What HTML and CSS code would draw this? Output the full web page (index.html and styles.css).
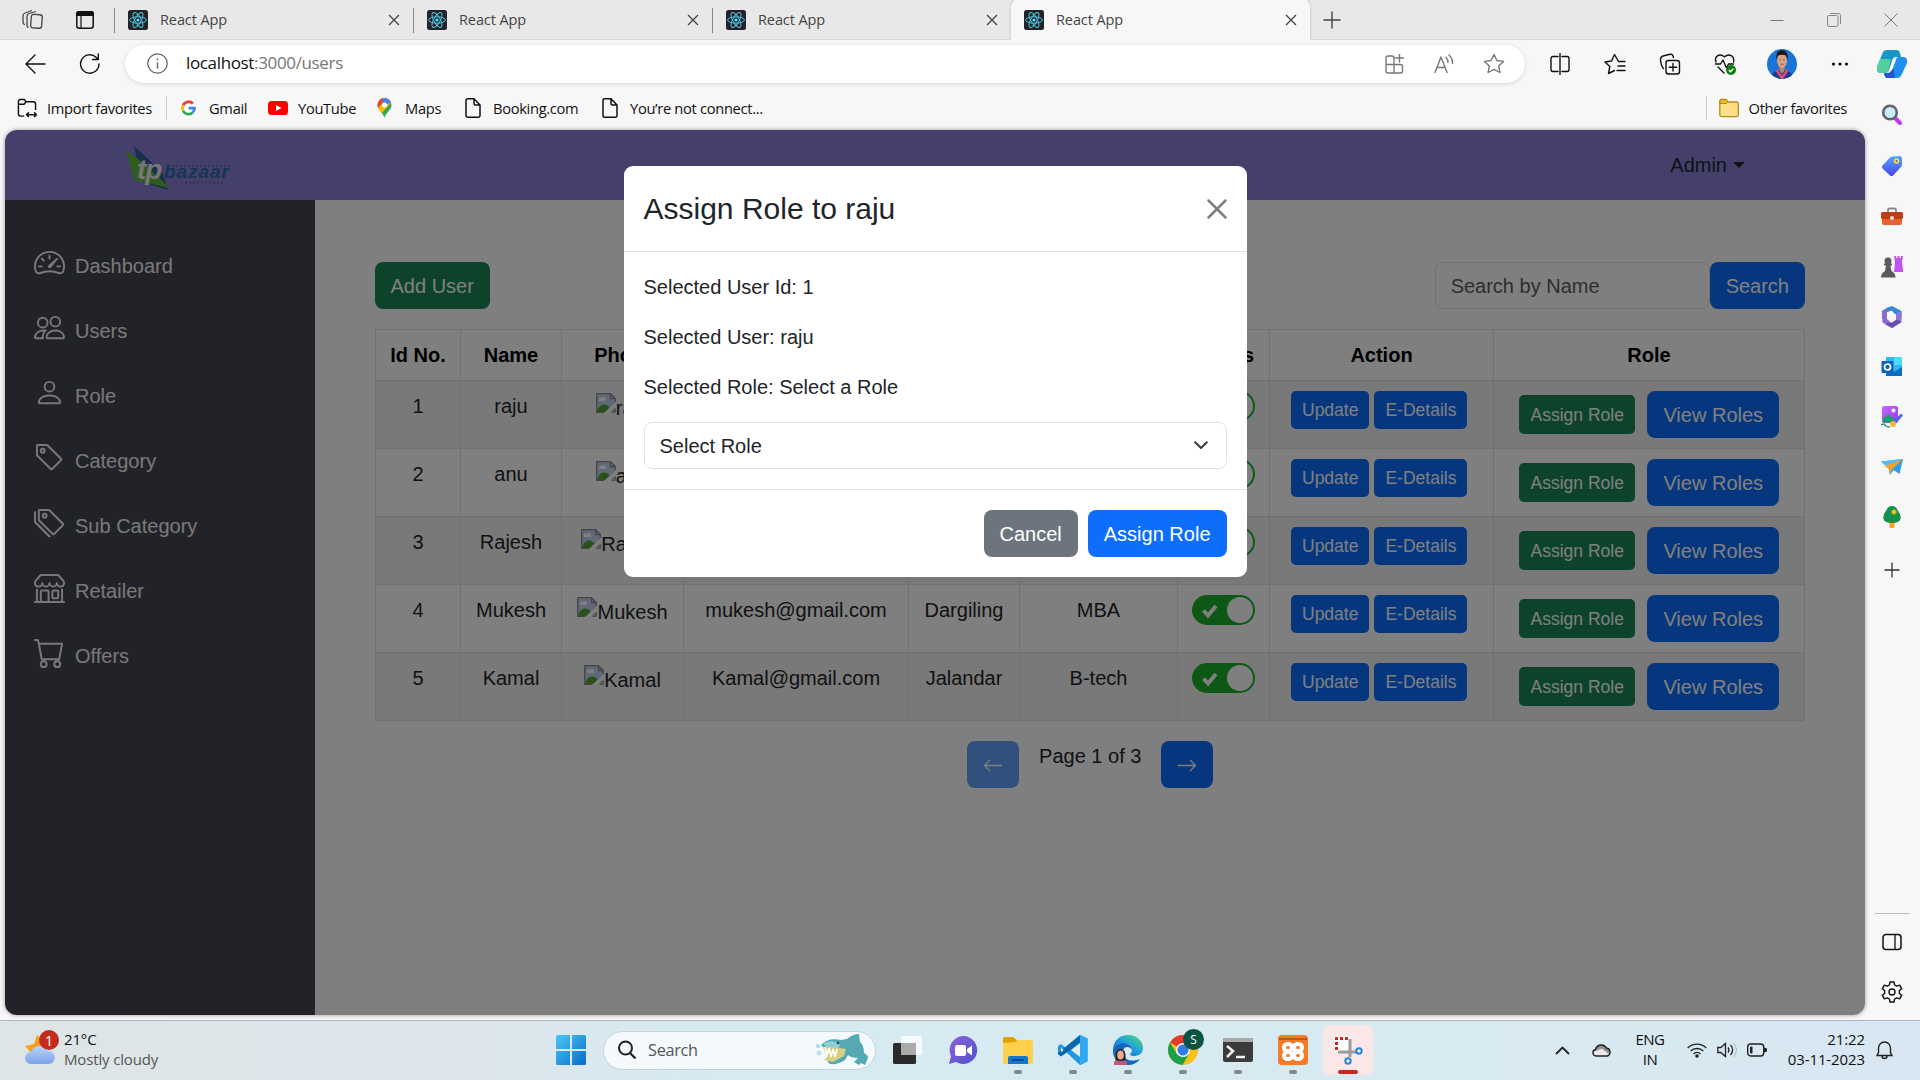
FILE: index.html
```html
<!DOCTYPE html>
<html lang="en">
<head>
<meta charset="utf-8">
<title>React App</title>
<link rel="stylesheet" href="styles.css">
</head>
<body>
<svg class="defs" aria-hidden="true">
  <defs>
    <symbol id="react" viewBox="0 0 20 20"><rect width="20" height="20" rx="2.5" fill="#20232a"/><g fill="none" stroke="#53c1de" stroke-width="1"><ellipse cx="10" cy="10" rx="8.4" ry="3.2"/><ellipse cx="10" cy="10" rx="8.4" ry="3.2" transform="rotate(60 10 10)"/><ellipse cx="10" cy="10" rx="8.4" ry="3.2" transform="rotate(120 10 10)"/></g><circle cx="10" cy="10" r="1.6" fill="#61dafb"/></symbol>
    <symbol id="x" viewBox="0 0 12 12"><path d="M1 1l10 10M11 1L1 11" fill="none" stroke="currentColor" stroke-width="1.3"/></symbol>
    <symbol id="file" viewBox="0 0 20 22"><path d="M3 3.5A1.8 1.8 0 0 1 4.800 1.700H11L17 8v10.500a1.800 1.800 0 0 1-1.800 1.800H4.800A1.800 1.800 0 0 1 3 18.500zM11 1.700V6.500A1.500 1.500 0 0 0 12.500 8H17" fill="none" stroke="#111" stroke-width="1.500"/></symbol>
    <symbol id="broken" viewBox="0 0 20 20"><path d="M.5.500h14l5 5V13l-7 6.500H.500z" fill="#c3d3f0"/><path d="M3 7.500a2 2 0 0 1 3-2.500 2.200 2.200 0 0 1 4 1.500 1.300 1.300 0 0 1 0 1.500H3z" fill="#fff"/><path d="M1 19c1-5 4-7.500 7-7.500 3 0 4.500 1.500 5.500 3L9 19z" fill="#4fa52e"/><path d="M20 9v3.500L12.500 20H8.500z" fill="#fff"/><path d="M8 19.300H.700V.700h13.800l4.800 4.800V9M14.500.700v4.800h4.800" fill="none" stroke="#8a8a8a" stroke-width="1.300"/><path d="M15.500 19.300h3.800V15.500z" fill="#c3d3f0" stroke="#8a8a8a"/></symbol>
    <symbol id="toggle" viewBox="0 0 63 30"><rect width="63" height="30" rx="15" fill="#1cb02a"/><circle cx="48" cy="15" r="13" fill="#fff"/><path d="M11.500 15.500l4.500 5 8-9.500" fill="none" stroke="#fff" stroke-width="4"/></symbol>
    <linearGradient id="blue" x1="0" y1="0" x2="1" y2="1"><stop stop-color="#4cc9f7"/><stop offset="1" stop-color="#0669c7"/></linearGradient>
    <linearGradient id="violet" x1="0" y1="0" x2="1" y2="1"><stop stop-color="#8a63d8"/><stop offset="1" stop-color="#5151cc"/></linearGradient>
    <linearGradient id="edge" x1="0" y1="1" x2="1" y2="0"><stop stop-color="#0c59b8"/><stop offset=".5" stop-color="#1b9de2"/><stop offset="1" stop-color="#59dd6c"/></linearGradient>
    <linearGradient id="pink" x1="0" y1="0" x2="1" y2="1"><stop stop-color="#c26bff"/><stop offset="1" stop-color="#9a35e8"/></linearGradient>
    <linearGradient id="tagblue" x1="0" y1="0" x2="0" y2="1"><stop stop-color="#55a5ff"/><stop offset="1" stop-color="#4544f0"/></linearGradient>
    <linearGradient id="cloud" x1="0" y1="0" x2="0" y2="1"><stop stop-color="#b8d2fb"/><stop offset="1" stop-color="#7ba4ea"/></linearGradient>
  </defs>
</svg>

<header class="tabstrip">
  <div class="strip-actions">
    <svg class="workspaces" width="21" height="22" viewBox="0 0 21 22"><g fill="none" stroke="#444" stroke-width="1.300"><rect x="9" y="5.500" width="11" height="13.500" rx="2.500" transform="rotate(4 14 12)"/><path d="M6.500 18.500a2 2 0 0 1-1.500-2V7.500a3 3 0 0 1 2-3l7-2M3 15.500A2 2 0 0 1 1 13.500V6.500A3 3 0 0 1 3 4l7-2.500"/></g></svg>
    <svg width="18" height="20" viewBox="0 0 18 20"><rect x=".8" y="1.800" width="16.400" height="16.400" rx="2.500" fill="none" stroke="#111" stroke-width="1.500"/><path d="M0 6V3.500A2.500 2.500 0 0 1 2.500 1h13A2.500 2.500 0 0 1 18 3.500V6z" fill="#111"/><path d="M5 6v12" stroke="#111" stroke-width="1.200"/></svg>
  </div>
  <div class="tab"><svg class="fav"><use href="#react"/></svg><span>React App</span><svg class="tab-x"><use href="#x"/></svg></div>
  <div class="tab"><svg class="fav"><use href="#react"/></svg><span>React App</span><svg class="tab-x"><use href="#x"/></svg></div>
  <div class="tab"><svg class="fav"><use href="#react"/></svg><span>React App</span><svg class="tab-x"><use href="#x"/></svg></div>
  <div class="tab active"><svg class="fav"><use href="#react"/></svg><span>React App</span><svg class="tab-x"><use href="#x"/></svg></div>
  <svg class="newtab" width="18" height="18" viewBox="0 0 18 18"><path d="M9 .5v17M.500 9h17" stroke="#444" stroke-width="1.400"/></svg>
  <div class="winctl">
    <svg viewBox="0 0 14 14"><path d="M.500 7.500h13" stroke="#777"/></svg>
    <svg viewBox="0 0 14 14"><g fill="none" stroke="#888"><rect x=".5" y="2.500" width="10.500" height="11" rx="1.500"/><path d="M3 .500h8.500a2 2 0 0 1 2 2V11"/></g></svg>
    <svg viewBox="0 0 14 14"><path d="M.500.500l13 13M13.500.500l-13 13" stroke="#777"/></svg>
  </div>
</header>

<div class="window">
  <div class="browser">
    <nav class="toolbar">
      <span class="slot"><svg width="22" height="22" viewBox="0 0 22 22"><path d="M21 11H2M11 2L2 11l9 9" class="ln"/></svg></span>
      <span class="slot"><svg width="22" height="22" viewBox="0 0 22 22"><path d="M20 11a9.200 9.200 0 1 1-3-6.800l2 2M19.300 1v5.500H13.500" class="ln"/></svg></span>
      <div class="address">
        <svg width="21" height="21" viewBox="0 0 21 21"><circle cx="10.500" cy="10.500" r="9.700" fill="none" stroke="#666" stroke-width="1.300"/><path d="M10.500 9.500v6M10.500 5.500v1.800" stroke="#666" stroke-width="1.500"/></svg>
        <span class="url">localhost<i>:3000/users</i></span>
        <span class="slot g"><svg width="19" height="20" viewBox="0 0 19 20"><path d="M9 10.500V4a2 2 0 0 0-2-2H3a2 2 0 0 0-2 2v13a2 2 0 0 0 2 2h12.500a2 2 0 0 0 2-2v-4.500a2 2 0 0 0-2-2H1M9 10.500V19M14.500 0v8M10.500 4h8" class="ln"/></svg></span>
        <span class="slot g"><svg width="20" height="20" viewBox="0 0 20 20"><path d="M1 18.500L7 3l6 15.500M3 13.500h8M12 3.500a7 7 0 0 1 2 5M15 1a11 11 0 0 1 3.500 8.500" class="ln"/></svg></span>
        <span class="slot g"><svg width="22" height="22" viewBox="0 0 22 22"><path d="M11 1.500l2.900 6 6.600.9-4.800 4.600 1.200 6.500L11 16.400l-5.900 3.100 1.200-6.500L1.500 8.400l6.600-.9z" class="ln"/></svg></span>
      </div>
      <span class="slot first"><svg width="20" height="22" viewBox="0 0 20 22"><path d="M8 3.500H3A2 2 0 0 0 1 5.500v11a2 2 0 0 0 2 2h5M12 3.500h5a2 2 0 0 1 2 2v11a2 2 0 0 1-2 2h-5M10 .500v21" class="ln"/></svg></span>
      <span class="slot"><svg width="22" height="22" viewBox="0 0 22 22"><path d="M21 8.500h-6.500L10.500 1.500 7.500 8 1 9l4.800 4.600L4.500 20.500l6-3M14 13h7M13 17.500h8" class="ln"/></svg></span>
      <span class="slot"><svg width="22" height="22" viewBox="0 0 22 22"><rect x="7" y="7.500" width="13.500" height="13.500" rx="2.500" class="ln"/><path d="M14 10.500v7.500M10.200 14.200h7.500M4.500 15.500C3 15 1.500 9 1.500 6.500s1-3 2.500-3.500l7-1.700c2-.5 3 .7 3.500 3.200" class="ln"/></svg></span>
      <span class="slot"><svg width="22" height="22" viewBox="0 0 22 22"><path d="M2 9C0 4 5-.500 10.500 3.800 16-.500 21 4 19.500 9M1.500 11h5l2.500-4 3.500 8 2-4h5M4 14l6 6" class="ln"/><circle cx="17" cy="17" r="5" fill="#107c10"/><path d="M14.800 17l1.700 1.700 2.800-3" fill="none" stroke="#fff" stroke-width="1.300"/></svg></span>
      <span class="slot av"><svg width="30" height="30" viewBox="0 0 30 30"><clipPath id="ac"><circle cx="15" cy="15" r="15"/></clipPath><g clip-path="url(#ac)"><rect width="30" height="30" fill="#1976d8"/><path d="M4 30c0-6 5-9 11-9s11 3 11 9z" fill="#1c3d8c"/><path d="M9.500 21l5.500 8 5.500-8" fill="none" stroke="#e0506e" stroke-width="2.500"/><path d="M12.500 16h5v5.500L15 25l-2.500-3.500z" fill="#c08466"/><ellipse cx="15" cy="11.500" rx="5" ry="7.500" fill="#d9a184"/><path d="M9.700 11C8.500 4 11 1.200 15 1.200S21.500 4 20.300 11L19 6.500c-2.500-1-5.500-1-8 0z" fill="#1c1618"/><path d="M12 10.800h2M16 10.800h2M13.500 15.300h3" stroke="#7d4b3c" stroke-width=".8"/></g></svg></span>
      <span class="slot"><svg width="18" height="6" viewBox="0 0 18 6"><circle cx="2.500" cy="3" r="1.600"/><circle cx="9" cy="3" r="1.600"/><circle cx="15.500" cy="3" r="1.600"/></svg></span>
    </nav>
    <nav class="bookmarks">
      <a class="import"><svg viewBox="0 0 21 22"><path d="M7.500 19.500H4A2.500 2.500 0 0 1 1.500 17V4A2 2 0 0 1 3.500 2h4l2 2.500H17A2.500 2.500 0 0 1 19.500 7v6M1.500 7h6l2-2.500M10 18h11M12.500 15.500L10 18l2.500 2.500M18 15.500l2.500 2.500-2.500 2.500" fill="none" stroke="#111" stroke-width="1.500"/></svg>Import favorites</a>
      <a><svg viewBox="0 0 20 20"><circle cx="9.500" cy="10" r="10" fill="#fff"/><g fill="none" stroke-width="2.800"><path d="M14 5.600A6.200 6.200 0 0 0 4 7.300" stroke="#ea4335"/><path d="M4 7.300a6.200 6.200 0 0 0 0 5.600" stroke="#fbbc05"/><path d="M4 12.900a6.200 6.200 0 0 0 9.500 1.800" stroke="#34a853"/><path d="M13.500 14.700a6 6 0 0 0 2-4.500H9.500" stroke="#4285f4"/></g></svg>Gmail</a>
      <a><svg viewBox="0 0 20 20"><rect y="3" width="20" height="14" rx="3.500" fill="#f00"/><path d="M8 7l5.500 3L8 13z" fill="#fff"/></svg>YouTube</a>
      <a><svg viewBox="0 0 20 20"><clipPath id="pin"><path d="M9.500 20C8.500 15 2.500 12 2.500 7a7 7 0 0 1 14 0c0 5-6 8-7 13z"/></clipPath><g clip-path="url(#pin)"><rect width="20" height="20" fill="#34a853"/><path d="M0 0h20L5 17H0z" fill="#fbbc04"/><path d="M0 0h12L3 10H0z" fill="#ea4335"/><path d="M7 0h13v4L9 7z" fill="#4285f4"/></g><circle cx="9.500" cy="7" r="2.500" fill="#fff"/></svg>Maps</a>
      <a><svg><use href="#file"/></svg>Booking.com</a>
      <a><svg><use href="#file"/></svg>You’re not connect...</a>
      <a class="other"><svg viewBox="0 0 20 20"><path d="M.8 4V3A1.500 1.500 0 0 1 2.300 1.500H7L9 4h8.500A1.800 1.800 0 0 1 19.300 5.800v11a1.800 1.800 0 0 1-1.800 1.800h-15A1.800 1.800 0 0 1 .8 16.800z" fill="#ffdf85" stroke="#b58a14" stroke-width="1.300"/><path d="M1 5.500V3A1.500 1.500 0 0 1 2.500 1.700H7l1.700 2L7.500 5.500z" fill="#eac12c" stroke="#b58a14"/></svg>Other favorites</a>
    </nav>

    <div class="viewport">
      <div class="app-header">
        <svg class="logo" width="106" height="44" viewBox="0 0 106 44"><path d="M8 0l28 26 6 18-26-8z" fill="#2a5f9a"/><path d="M0 4l16 12 28 26-36-8z" fill="#62b83c"/><text x="11" y="33" class="tp">tp</text><text x="38" y="32" class="bz" textLength="65">bazaar</text><path d="M46 20h58M59 36.500h40" stroke="#6468a4" stroke-width="2" stroke-dasharray="2 2"/></svg>
        <span class="admin">Admin</span>
      </div>
      <div class="app-body">
        <aside class="side">
          <a><svg viewBox="0 0 16 16"><path d="M8 4a.5.5 0 0 1 .5.5V6a.5.5 0 0 1-1 0V4.500A.5.5 0 0 1 8 4M3.732 5.732a.5.5 0 0 1 .707 0l.915.914a.5.5 0 1 1-.708.708l-.914-.915a.5.5 0 0 1 0-.707M2 10a.5.5 0 0 1 .5-.5h1.586a.5.5 0 0 1 0 1H2.500A.5.5 0 0 1 2 10m9.500 0a.5.5 0 0 1 .5-.5h1.500a.5.5 0 0 1 0 1H12a.5.5 0 0 1-.5-.5m.754-4.246a.39.39 0 0 0-.527-.02L7.547 9.310a.91.91 0 1 0 1.302 1.258l3.434-4.297a.39.39 0 0 0-.029-.518z"/><path fill-rule="evenodd" d="M0 10a8 8 0 1 1 15.547 2.661c-.442 1.253-1.845 1.602-2.932 1.250C11.309 13.488 9.475 13 8 13c-1.474 0-3.310.488-4.615.911-1.087.352-2.490.003-2.932-1.250A8 8 0 0 1 0 10m8-7a7 7 0 0 0-6.603 9.329c.203.575.923.876 1.680.63C4.397 12.533 6.358 12 8 12s3.604.532 4.923.96c.757.245 1.477-.056 1.680-.631A7 7 0 0 0 8 3"/></svg>Dashboard</a>
          <a><svg viewBox="0 0 16 16"><path d="M15 14s1 0 1-1-1-4-5-4-5 3-5 4 1 1 1 1zm-7.978-1L7 12.996c.001-.264.167-1.030.76-1.720C8.312 10.629 9.282 10 11 10c1.717 0 2.687.63 3.240 1.276.593.69.758 1.457.76 1.720l-.008.002-.014.002zM11 7a2 2 0 1 0 0-4 2 2 0 0 0 0 4m3-2a3 3 0 1 1-6 0 3 3 0 0 1 6 0M6.936 9.280a6 6 0 0 0-1.230-.247A7 7 0 0 0 5 9c-4 0-5 3-5 4q0 1 1 1h4.216A2.240 2.240 0 0 1 5 13c0-1.010.377-2.042 1.090-2.904.243-.294.526-.569.846-.816M4.920 10A5.500 5.500 0 0 0 4 13H1c0-.26.164-1.030.76-1.724.545-.636 1.492-1.256 3.160-1.275ZM1.500 5.500a3 3 0 1 1 6 0 3 3 0 0 1-6 0m3-2a2 2 0 1 0 0 4 2 2 0 0 0 0-4"/></svg>Users</a>
          <a><svg viewBox="0 0 16 16"><path d="M8 8a3 3 0 1 0 0-6 3 3 0 0 0 0 6m2-3a2 2 0 1 1-4 0 2 2 0 0 1 4 0m4 8c0 1-1 1-1 1H3s-1 0-1-1 1-4 6-4 6 3 6 4m-1-.004c-.001-.246-.154-.986-.832-1.664C11.516 10.680 10.289 10 8 10s-3.516.68-4.168 1.332c-.678.678-.83 1.418-.832 1.664z"/></svg>Role</a>
          <a><svg viewBox="0 0 16 16"><path d="M6 4.500a1.500 1.500 0 1 1-3 0 1.500 1.500 0 0 1 3 0m-1 0a.5.5 0 1 0-1 0 .5.5 0 0 0 1 0"/><path d="M2 1h4.586a1 1 0 0 1 .707.293l7 7a1 1 0 0 1 0 1.414l-4.586 4.586a1 1 0 0 1-1.414 0l-7-7A1 1 0 0 1 1 6.586V2a1 1 0 0 1 1-1m0 5.586 7 7L13.586 9l-7-7H2z"/></svg>Category</a>
          <a><svg viewBox="0 0 16 16"><path d="M3 2v4.586l7 7L14.586 9l-7-7zM2 2a1 1 0 0 1 1-1h4.586a1 1 0 0 1 .707.293l7 7a1 1 0 0 1 0 1.414l-4.586 4.586a1 1 0 0 1-1.414 0l-7-7A1 1 0 0 1 2 6.586z"/><path d="M5.500 5a.5.5 0 1 1 0-1 .5.5 0 0 1 0 1m0 1a1.500 1.500 0 1 0 0-3 1.500 1.500 0 0 0 0 3M1 7.086a1 1 0 0 0 .293.707L8.750 15.250l-.043.043a1 1 0 0 1-1.414 0l-7-7A1 1 0 0 1 0 7.586V3a1 1 0 0 1 1-1z"/></svg>Sub Category</a>
          <a><svg viewBox="0 0 16 16"><path d="M2.970 1.350A1 1 0 0 1 3.730 1h8.540a1 1 0 0 1 .76.35l2.609 3.044A1.500 1.500 0 0 1 16 5.370v.255a2.375 2.375 0 0 1-4.250 1.458A2.370 2.370 0 0 1 9.875 8 2.370 2.370 0 0 1 8 7.083 2.370 2.370 0 0 1 6.125 8a2.370 2.370 0 0 1-1.875-.917A2.375 2.375 0 0 1 0 5.625V5.370a1.500 1.500 0 0 1 .361-.976zm1.780 4.275a1.375 1.375 0 0 0 2.750 0 .5.5 0 0 1 1 0 1.375 1.375 0 0 0 2.750 0 .5.5 0 0 1 1 0 1.375 1.375 0 1 0 2.750 0V5.370a.5.5 0 0 0-.12-.325L12.270 2H3.730L1.120 5.045A.5.5 0 0 0 1 5.370v.255a1.375 1.375 0 0 0 2.750 0 .5.5 0 0 1 1 0M1.500 8.500A.5.5 0 0 1 2 9v6h1v-5a1 1 0 0 1 1-1h3a1 1 0 0 1 1 1v5h6V9a.5.5 0 0 1 1 0v6h.5a.5.5 0 0 1 0 1H.5a.5.5 0 0 1 0-1H1V9a.5.5 0 0 1 .5-.5M4 15h3v-5H4zm5-5a1 1 0 0 1 1-1h2a1 1 0 0 1 1 1v3a1 1 0 0 1-1 1h-2a1 1 0 0 1-1-1zm3 0h-2v3h2z"/></svg>Retailer</a>
          <a><svg viewBox="0 0 16 16"><path d="M0 1.500A.5.5 0 0 1 .5 1H2a.5.5 0 0 1 .485.379L2.890 3H14.500a.5.5 0 0 1 .491.592l-1.500 8A.5.5 0 0 1 13 12H4a.5.5 0 0 1-.491-.408L2.010 3.607 1.610 2H.5a.5.5 0 0 1-.5-.5M3.102 4l1.313 7h8.170l1.313-7zM5 12a2 2 0 1 0 0 4 2 2 0 0 0 0-4m7 0a2 2 0 1 0 0 4 2 2 0 0 0 0-4m-7 1a1 1 0 1 1 0 2 1 1 0 0 1 0-2m7 0a1 1 0 1 1 0 2 1 1 0 0 1 0-2"/></svg>Offers</a>
        </aside>
        <main class="main">
          <div class="actions"><button class="btn green">Add User</button><div class="search"><span class="field">Search by Name</span><button class="btn">Search</button></div></div>
          <table>
            <colgroup><col class="c1"><col class="c2"><col class="c3"><col class="c4"><col class="c5"><col class="c6"><col class="c7"><col class="c8"><col class="c9"></colgroup>
            <thead><tr><th>Id No.</th><th>Name</th><th>Photo</th><th></th><th></th><th></th><th>Status</th><th>Action</th><th>Role</th></tr></thead>
            <tbody>
              <tr><td>1</td><td>raju</td><td><span class="photo"><svg><use href="#broken"/></svg>raju</span></td><td></td><td></td><td></td><td><svg class="tg"><use href="#toggle"/></svg></td><td><div class="acts"><button class="btn sm">Update</button><button class="btn sm">E-Details</button></div></td><td><div class="roles"><button class="btn sm green">Assign Role</button><button class="btn">View Roles</button></div></td></tr>
              <tr><td>2</td><td>anu</td><td><span class="photo"><svg><use href="#broken"/></svg>anu</span></td><td></td><td></td><td></td><td><svg class="tg"><use href="#toggle"/></svg></td><td><div class="acts"><button class="btn sm">Update</button><button class="btn sm">E-Details</button></div></td><td><div class="roles"><button class="btn sm green">Assign Role</button><button class="btn">View Roles</button></div></td></tr>
              <tr><td>3</td><td>Rajesh</td><td><span class="photo"><svg><use href="#broken"/></svg>Rajesh</span></td><td></td><td></td><td></td><td><svg class="tg"><use href="#toggle"/></svg></td><td><div class="acts"><button class="btn sm">Update</button><button class="btn sm">E-Details</button></div></td><td><div class="roles"><button class="btn sm green">Assign Role</button><button class="btn">View Roles</button></div></td></tr>
              <tr><td>4</td><td>Mukesh</td><td><span class="photo"><svg><use href="#broken"/></svg>Mukesh</span></td><td>mukesh@gmail.com</td><td>Dargiling</td><td>MBA</td><td><svg class="tg"><use href="#toggle"/></svg></td><td><div class="acts"><button class="btn sm">Update</button><button class="btn sm">E-Details</button></div></td><td><div class="roles"><button class="btn sm green">Assign Role</button><button class="btn">View Roles</button></div></td></tr>
              <tr><td>5</td><td>Kamal</td><td><span class="photo"><svg><use href="#broken"/></svg>Kamal</span></td><td>Kamal@gmail.com</td><td>Jalandar</td><td>B-tech</td><td><svg class="tg"><use href="#toggle"/></svg></td><td><div class="acts"><button class="btn sm">Update</button><button class="btn sm">E-Details</button></div></td><td><div class="roles"><button class="btn sm green">Assign Role</button><button class="btn">View Roles</button></div></td></tr>
            </tbody>
          </table>
          <div class="pager">
            <button class="btn page off"><svg width="20" height="20" viewBox="0 0 20 20"><path d="M19 10.500H2M7 5l-5.500 5.500L7 16" fill="none" stroke="#fff" stroke-width="1.300"/></svg></button>
            <span>Page 1 of 3</span>
            <button class="btn page"><svg width="20" height="20" viewBox="0 0 20 20"><path d="M1 10.500h17M13 5l5.500 5.500L13 16" fill="none" stroke="#fff" stroke-width="1.300"/></svg></button>
          </div>
        </main>
      </div>
      <div class="backdrop">
        <div class="modal">
          <div class="m-head"><h4>Assign Role to raju</h4><svg width="20" height="20" viewBox="0 0 20 20"><path d="M1.500 1.500l17 17M18.500 1.500l-17 17" stroke="#7f7f7f" stroke-width="2.500" stroke-linecap="round"/></svg></div>
          <div class="m-body">
            <p>Selected User Id: 1</p><p>Selected User: raju</p><p>Selected Role: Select a Role</p>
            <div class="select">Select Role<svg width="14" height="9" viewBox="0 0 14 9"><path d="M1.200 1.200L7 7l5.800-5.800" fill="none" stroke="#343a40" stroke-width="2" stroke-linecap="round" stroke-linejoin="round"/></svg></div>
          </div>
          <div class="m-foot"><button class="btn gray">Cancel</button><button class="btn">Assign Role</button></div>
        </div>
      </div>
    </div>
  </div>

  <aside class="edgebar">
    <svg class="copilot" width="30" height="28" viewBox="0 0 30 28"><path d="M6 2q1-2 4-2h10q2 0 3 3l1 4h-5q-3 0-4 4l-3 9q-1 3-4 3H4q-5 0-4-6z" fill="#1696c9"/><path d="M0 17L3 9h11l-2 9q-1 5-4 5H4q-5 0-4-6z" fill="#53cf9c"/><path d="M24 26q-1 2-4 2H10q-2 0-3-5h4q3 0 4-4l3-9q1-3 4-3h4q5 0 4 6z" fill="#1d8ef2"/><path d="M7 23h4q3 0 4-4l1-3 2 12h-8q-2 0-3-5z" fill="#2456d3"/><path d="M14 17l3-8q1-2 3-2l-4 11q-1 3-3 3z" fill="#fff"/></svg>
    <svg viewBox="0 0 22 22"><path d="M14 14l5 5" stroke="#bd36f5" stroke-width="4" stroke-linecap="round"/><circle cx="9" cy="8.500" r="6.800" fill="#c9ebfc" stroke="#646464" stroke-width="2.600"/></svg>
    <svg viewBox="0 0 22 22"><path d="M11 1.500l7.500-.5q2.500 0 2.500 2.500V10q0 1-1 2l-8 8.500q-1.500 1.500-3 0L1.500 13.500q-1.500-1.500 0-3L9 2.500z" fill="url(#tagblue)"/><circle cx="15.500" cy="6" r="1.900" fill="#2f65d8" stroke="#ffdc32" stroke-width="1.800"/></svg>
    <svg viewBox="0 0 22 22"><path d="M7 6V4q0-1.500 1.500-1.500h5Q15 2.500 15 4v2" fill="none" stroke="#8a8a8a" stroke-width="1.800"/><rect x="1" y="10" width="20" height="9" rx="2" fill="#e5622e"/><rect y="6" width="22" height="7" rx="1.500" fill="#bb3f12"/><circle cx="11" cy="12" r="2" fill="#ddd"/></svg>
    <svg viewBox="0 0 22 22"><path d="M13 0h2v2h1.500V0h2v2H20V0h2l-1 6 1 8q1 1 0 2h-9l1-10z" fill="#c453f2"/><path d="M3.500 5a3.500 3.500 0 1 1 7 0q0 1.500-1 2.500h1.500v2H9.500l1 5.500q4 2 4 6.500H0q0-4.500 4-6.500l1-5.500H3v-2h1.500q-1-1-1-2.500z" fill="#5a5a5a"/></svg>
    <svg viewBox="0 0 22 22"><path d="M6 1.800L11 0l9.500 5v7l-6.500-3-3-4.500-6 2V11L1 13V5z" fill="#3686d6"/><path d="M20.500 5v11L15 19.500V8z" fill="#8f72da"/><path d="M15 19.500L11 22l-9.500-5.500L1 7l5-5v11l5 4.500z" fill="#8a6cc8"/><path d="M20.500 16L11 22l-7-4 7-1.500 4.500-3z" fill="#6a4bb0"/><path d="M11 6l4 2.500v5L11 16l-4-2.500v-5z" fill="#f7f7f7"/></svg>
    <svg viewBox="0 0 22 22"><path d="M5 1h16v19H5z" fill="#35b8f1"/><path d="M13 1h8v8h-8z" fill="#50d9ff"/><path d="M5 11l8 5 8-5v9H5z" fill="#0a6ebd"/><rect x=".5" y="5" width="12" height="12" rx="1" fill="#0f63b8"/><circle cx="6.500" cy="11" r="3" fill="none" stroke="#fff" stroke-width="1.700"/></svg>
    <svg viewBox="0 0 22 22"><rect x="1" y="0" width="16" height="17" rx="2" fill="url(#pink)"/><path d="M1 14l6-6 9 8H2z" fill="#15a06a"/><circle cx="12.500" cy="4.500" r="2" fill="#fff"/><path d="M12 15.500L20 7.500l2 2-7.500 8.500z" fill="#5265ed"/><circle cx="12" cy="18" r="3" fill="#f5b83d"/><path d="M0 19q3-2 4 0t5 2" fill="none" stroke="#15a06a" stroke-width="1.500"/></svg>
    <svg viewBox="0 0 22 22"><path d="M0 5.500L22 3l-3.500 15-6-4-3.500 5-1.500-7z" fill="#2c9cf0"/><path d="M0 5.500L22 3 8 12z" fill="#55bdf8"/><path d="M22 3L4 10l4 3 1 6 1.500-5z" fill="#f5a11d"/></svg>
    <svg viewBox="0 0 22 22"><rect x="8.500" y="15" width="5" height="7" rx="1" fill="#f3a429"/><path d="M11 0q4 0 5.500 4 4 5 3 9-1 4-8.500 4T2.500 13q-1-4 3-9Q7 0 11 0z" fill="#16914a"/><path d="M13 3.500v5M10.500 6h5" stroke="#f7bd25" stroke-width="2.500"/></svg>
    <svg class="plus" viewBox="0 0 22 22"><path d="M11 3.500v15M3.500 11h15" stroke="#333" stroke-width="1.300"/></svg>
    <hr>
    <svg class="panel" viewBox="0 0 22 22"><rect x="2" y="3.500" width="18" height="15" rx="3" fill="none" stroke="#111" stroke-width="1.500"/><path d="M14 3.500v15" stroke="#111" stroke-width="1.300"/></svg>
    <svg class="gear" viewBox="0 0 22 22"><path d="M9 1h4l.6 3 2.100 1.200 2.900-1 2 3.500-2.300 2v2.600l2.300 2-2 3.500-2.900-1-2.100 1.200L13 21H9l-.6-3-2.100-1.200-2.900 1-2-3.500 2.300-2V9.700l-2.300-2 2-3.500 2.900 1L8.400 4z" fill="none" stroke="#111" stroke-width="1.400" stroke-linejoin="round"/><circle cx="11" cy="11" r="3" fill="none" stroke="#111" stroke-width="1.400"/></svg>
  </aside>
</div>

<footer class="taskbar">
  <div class="weather">
    <svg width="35" height="40" viewBox="0 0 35 40"><path d="M12 5l-3 9-9 2 7 8 8-1 8-9z" fill="#f4a21c"/><path d="M6 34a6 6 0 0 1 0-12 9 9 0 0 1 16.500-1A6.500 6.500 0 0 1 24 34z" fill="url(#cloud)"/><circle cx="24" cy="10" r="10" fill="#c42b1c"/><text x="24" y="15.500" class="badge">1</text></svg>
    <div>21°C<br><span>Mostly cloudy</span></div>
  </div>
  <svg class="win" width="30" height="30" viewBox="0 0 30 30"><path d="M0 1.500Q0 0 1.500 0H14v14H0zM16 0h12.500Q30 0 30 1.500V14H16zM0 16h14v14H1.500Q0 30 0 28.500zM16 16h14v12.500q0 1.500-1.500 1.500H16z" fill="url(#blue)"/></svg>
  <div class="pill"><svg width="20" height="20" viewBox="0 0 20 20"><circle cx="8.500" cy="8" r="6.500" fill="none" stroke="#222" stroke-width="2"/><path d="M13 13l5.500 5.500" stroke="#222" stroke-width="2.300"/></svg><span>Search</span><svg class="shark" width="54" height="32" viewBox="0 0 54 32"><path d="M6 11Q13 3 26 6l6-1q6-5 12-5l1 8q4 3 4 11 4 2 4 5l-3 7-4-2-2 2-5-3 4-4q-7 0-10-3l-3 5q-7 5-15 4l-3-3q10-2 10-7Q8 14 6 11z" fill="#55a8b4"/><path d="M8 9q10-4 17 1l-2 6q-7 0-12-3z" fill="#8ed2d6"/><path d="M8 13l4 10-3 3 9 2 11-6 2-7-6-1z" fill="#d9cf83"/><path d="M10 13l2 8 2-7 2 9 2-8 2 8 2-8" fill="none" stroke="#fff" stroke-width="1.500"/><circle cx="23" cy="9" r="1.300" fill="#174b60"/><circle cx="3" cy="12" r="2" fill="#9fd9e8"/><circle cx="4" cy="19" r="2.500" fill="#b9e3ee"/></svg></div>
  <div class="apps">
    <span><svg viewBox="0 0 30 30"><rect x="0" y="8" width="23" height="21" rx="1.500" fill="#2b2b2b"/><rect x="8" y="1" width="21" height="19" rx="1.500" fill="#fff" fill-opacity=".75"/><rect x="8" y="8" width="15" height="12" fill="#aaa"/></svg></span>
    <span><svg viewBox="0 0 30 30"><path d="M15 1a14 14 0 1 1-7 26l-7 2 2-8A14 14 0 0 1 15 1z" fill="url(#violet)"/><rect x="7" y="10" width="11" height="11" rx="2" fill="#fff"/><path d="M19 14l5-3.500v10L19 17z" fill="#fff"/></svg></span>
    <span class="run"><svg viewBox="0 0 30 30"><path d="M0 4q0-2 2-2h8l4 3v6H0z" fill="#dfa100"/><path d="M0 8l12-1 3-2h13q2 0 2 2v20q0 2-2 2H2q-2 0-2-2z" fill="#ffd04a"/><path d="M5 29v-6q0-2 2-2h16q2 0 2 2v6z" fill="#1278cf"/><path d="M9 25h12" stroke="#084b88" stroke-width="2"/></svg></span>
    <span class="run"><svg viewBox="0 0 30 30"><path d="M22 0l7.500 3.500v23L22 30 8 17 3 21l-3-2V11l3-2 5 4z" fill="#2196e3"/><path d="M22 0v8l-9.500 7L3 21.500 0 19v-1z" fill="#0868aa"/><path d="M22 8v14l-9-7z" fill="#dceff5"/><path d="M3 12.500v5L5.500 15z" fill="#dceff5"/><path d="M22 0l7.500 3.500v23L22 30z" fill="#2fa8f3"/></svg></span>
    <span class="run"><svg viewBox="0 0 30 30"><path d="M15 0c9 0 15 6 15 13 0 6-5 8-9 8-3 0-4-1-4-2 1-1 2-2 2-4 0-4-4-7-9-7-4 0-8 2-10 6C1 5 7 0 15 0z" fill="url(#edge)"/><path d="M0 14c2-4 6-6 10-6 5 0 9 3 9 7-1-2-3-3-5-3-3 0-4 3-4 5 0 7 7 11 17 7-3 4-7 6-12 6C6 30-1 23 0 14z" fill="#1268c0"/><path d="M1 30v-3q2-3 6-3t7 3v3z" fill="#c05a78"/><path d="M2.500 25q-1-11 5-11t5 11q-5 2-10 0z" fill="#2a1f22"/><ellipse cx="7.500" cy="20" rx="3.300" ry="4.500" fill="#e2ad92"/></svg></span>
    <span class="run"><svg class="wide" viewBox="0 0 36 36"><circle cx="15" cy="21" r="15" fill="#fbc116"/><path d="M15 21L2 13.500a15 15 0 0 1 26 0z" fill="#e33b2e"/><path d="M2 13.500A15 15 0 0 0 14.500 36L21 25l-12 0z" fill="#1da04b"/><circle cx="15" cy="21" r="7" fill="#fff"/><circle cx="15" cy="21" r="5.600" fill="#3579e6"/><circle cx="25.500" cy="10.500" r="10.500" fill="#0b5345"/><text x="25.500" y="15" class="sbadge">S</text></svg></span>
    <span class="run"><svg viewBox="0 0 30 30"><rect y="3" width="30" height="24" rx="2" fill="#3b3b3b"/><path d="M0 7V5q0-2 2-2h26q2 0 2 2v2z" fill="#aaa"/><path d="M4 11l6 5-6 6M13 22h9" fill="none" stroke="#f2f2f2" stroke-width="2.500"/></svg></span>
    <span class="run"><svg viewBox="0 0 30 30"><rect width="30" height="30" rx="4" fill="#f47b29"/><path d="M1 4h28" stroke="#c85610" stroke-width="2"/><g fill="none" stroke="#fff" stroke-width="4"><rect x="6" y="9" width="8" height="7" rx="3.500"/><rect x="16" y="9" width="8" height="7" rx="3.500"/><rect x="6" y="17" width="8" height="7" rx="3.500"/><rect x="16" y="17" width="8" height="7" rx="3.500"/></g></svg></span>
    <span class="snip"><svg viewBox="0 0 30 30"><rect x="1" y="1" width="16" height="15" fill="#fff"/><path d="M3.500 15V3.500H15" fill="none" stroke="#d9230f" stroke-width="3" stroke-dasharray="3 2"/><path d="M17 4v18M5 17h18" stroke="#989da0" stroke-width="3"/><g fill="none" stroke="#2188d9" stroke-width="2"><circle cx="26" cy="16" r="2.700"/><circle cx="15" cy="26" r="2.700"/></g></svg></span>
  </div>
  <div class="tray">
    <span class="t40"><svg width="15" height="9" viewBox="0 0 15 9"><path d="M1 8l6.500-6.500L14 8" fill="none" stroke="#222" stroke-width="1.800"/></svg></span>
    <span class="t40"><svg width="20" height="14" viewBox="0 0 20 14"><path d="M4 13a3.300 3.300 0 0 1-.5-6.500A6 6 0 0 1 14.500 5 4.200 4.200 0 0 1 15.500 13z" fill="#e8e8e8"/><path d="M2 8.500l8-3 6 5 2.500-2A4 4 0 0 0 14.500 5 6 6 0 0 0 3.500 6.500z" fill="#8f8f8f"/><path d="M4 13a3.300 3.300 0 0 1-.5-6.500A6 6 0 0 1 14.500 5 4.200 4.200 0 0 1 15.500 13z" fill="none" stroke="#222" stroke-width="1.400"/></svg></span>
    <span class="lang">ENG<br>IN</span>
    <span class="t30"><svg width="20" height="16" viewBox="0 0 20 16"><g fill="none" stroke="#222" stroke-width="1.400"><path d="M.700 6a13 13 0 0 1 18.600 0M3.700 9a9 9 0 0 1 12.600 0M6.500 12a5 5 0 0 1 7 0"/></g><circle cx="10" cy="14" r="1.800" fill="#222"/></svg></span>
    <span class="t30"><svg width="20" height="16" viewBox="0 0 20 16"><path d="M.800 5.500h3L8.500 1.500v13l-4.700-4h-3z M11 5.500a4 4 0 0 1 0 5M13.500 3a7 7 0 0 1 0 10" fill="none" stroke="#222" stroke-width="1.300"/><path d="M16.500 1a10 10 0 0 1 0 14" fill="none" stroke="#aab4b8"/></svg></span>
    <span class="t30"><svg width="20" height="14" viewBox="0 0 20 14"><rect x=".7" y="1" width="16" height="12" rx="3" fill="none" stroke="#222" stroke-width="1.400"/><rect x="3" y="3.500" width="2.500" height="7" rx="1" fill="#222"/><path d="M17 4.500l3 1v3l-3 1z" fill="#222"/></svg></span>
    <span class="clock">21:22<br>03-11-2023</span>
    <span class="bell"><svg width="17" height="19" viewBox="0 0 17 19"><path d="M8.500 1A6 6 0 0 0 2.500 7v4.500L1 14.500h15l-1.500-3V7a6 6 0 0 0-6-6zM6 15a2.500 2.500 0 0 0 5 0" fill="none" stroke="#222" stroke-width="1.400"/></svg></span>
  </div>
</footer>
</body>
</html>
```
FILE: styles.css
```css
* { box-sizing: border-box; }
body { margin: 0; width: 1920px; height: 1080px; overflow: hidden; display: flex; flex-direction: column; background: #f7f7f7; font-family: "Open Sans", sans-serif; font-size: 15px; color: #111; }
svg { display: block; flex: none; }
.defs { width: 0; height: 0; position: absolute; }
button { font: inherit; border: 0; }

/* tab strip */
.tabstrip { height: 40px; flex: none; display: flex; align-items: center; background: #e8e8e8; border-bottom: 1px solid #d8d8d8; }
.strip-actions { width: 114px; display: flex; align-items: center; gap: 33px; padding-left: 22px; }
.tab { width: 299px; height: 40px; display: flex; align-items: center; padding: 0 14px; color: #444; font-size: 14.5px; letter-spacing: -0.1px; position: relative; }
.tab:not(.active)::before { content: ""; width: 1px; height: 25px; background: #888; position: absolute; left: 0; top: 8px; }
.tab span { margin-left: 12px; flex: 1; }
.tab.active { background: #f7f7f7; border-radius: 8px 8px 0 0; height: 41px; padding-left: 13px; box-shadow: 0 0 3px #0003; clip-path: inset(0 -4px 0 -4px); }
.fav { width: 20px; height: 20px; }
.tab-x { width: 12px; height: 12px; margin-right: -1px; }
.newtab { margin-left: 13px; }
.winctl { margin-left: auto; display: flex; gap: 43px; padding-right: 22px; }
.winctl svg { width: 14px; height: 14px; }

.window { flex: 1; display: flex; min-height: 0; }
.browser { width: 1865px; display: flex; flex-direction: column; padding-bottom: 5px; }

/* address row */
.toolbar { height: 47px; flex: none; display: flex; align-items: center; padding-left: 7px; }
.slot { width: 55px; flex: none; display: flex; justify-content: center; }
.toolbar > .slot:nth-child(-n+2) { width: 55.5px; }
.slot.g { width: 50px; color: #777; }
.toolbar .slot.av { width: 60px; }
.slot.first { margin-left: 7px; }
.ln { fill: none; stroke: currentColor; stroke-width: 1.4; stroke-linejoin: round; stroke-linecap: round; }
.address { width: 1400px; height: 38px; flex: none; margin-left: 7px; padding: 0 6px 0 22px; display: flex; align-items: center; border-radius: 19px; background: #fff; box-shadow: 0 1px 4px #0002; }
.url { flex: 1; margin: -2px 0 0 18px; font-size: 17px; letter-spacing: -0.35px; color: #111; }
.url i { font-style: normal; color: #767676; }

/* favorites row */
.bookmarks { height: 43px; flex: none; display: grid; grid-template-columns: 162px 89px 107px 88px 137px 1fr auto; align-items: center; padding: 0 18px 2px 17px; font-size: 14.7px; letter-spacing: -0.32px; }
.bookmarks a { display: flex; align-items: center; gap: 10px; height: 24px; white-space: nowrap; }
.bookmarks svg { width: 20px; height: 22px; }
.bookmarks .import { margin-right: 12px; border-right: 1px solid #ccc; }
.bookmarks .other { border-left: 1px solid #ccc; padding-left: 12px; }

/* page */
.viewport { flex: 1; margin-left: 5px; position: relative; overflow: hidden; border-radius: 12px; background: #fff; display: flex; flex-direction: column; font-family: "Liberation Sans", Arial, sans-serif; font-size: 20px; line-height: 30px; color: #212529; box-shadow: 0 0 4px #0006; }
.app-header { height: 70px; flex: none; background: #8880d6; display: flex; justify-content: space-between; padding: 16px 120px 0 121px; }
.tp { font: italic bold 28px "Liberation Sans", sans-serif; fill: #eee; letter-spacing: -1px; }
.bz { font: italic bold 19px "Liberation Sans", sans-serif; fill: #2f69a8; }
.admin { height: 37px; display: flex; align-items: center; gap: 6px; }
.admin::after { content: ""; border: 6px solid transparent; border-top-color: #212529; border-bottom: 0; }
.app-body { flex: 1; display: flex; }
.side { width: 310px; background: #444650; padding: 33px 0 0 29px; color: #f2f2f2; }
.side a { display: flex; align-items: center; height: 65px; gap: 10px; }
.side svg { width: 31px; height: 31px; fill: currentColor; margin-bottom: 7px; }
.main { flex: 1; padding: 62px 60px 0; }
.actions { display: flex; justify-content: space-between; margin-bottom: 20px; }
.search { display: flex; }
.field { width: 275px; height: 47px; padding: 8px 15px 6px; border: 1px solid #dee2e6; border-radius: 8px; color: #595c5f; }
.btn { height: 47px; padding: 0 16px; border-radius: 8px; background: #0d6efd; color: #fff; line-height: 30px; white-space: nowrap; }
.btn.green { background: #198754; }
.btn.gray { background: #6c757d; }
.btn.sm { height: 38px; padding: 0 11px; border-radius: 5px; font-size: 17.5px; line-height: 26px; }
table { width: 1430px; margin-left: .5px; table-layout: fixed; border-collapse: collapse; text-align: center; }
th, td { border: 1px solid #dee2e6; padding: 10px 0; vertical-align: top; }
th { height: 51px; color: #000; }
td { height: 68px; }
tbody tr:nth-child(odd) { background: #f2f2f2; }
.c1 { width: 85px; } .c2 { width: 101px; } .c3 { width: 122px; } .c4 { width: 225px; } .c5 { width: 111px; } .c6 { width: 158px; } .c7 { width: 92px; } .c8 { width: 224px; }
.photo { display: flex; justify-content: center; align-items: flex-start; line-height: 34px; height: 30px; }
.photo svg { width: 20px; height: 20px; margin-top: 2px; }
.tg { width: 63px; height: 30px; margin: 0 auto; }
.acts { display: flex; padding-left: 21px; gap: 5px; }
.roles { display: flex; align-items: center; padding-left: 25px; gap: 12px; height: 47px; }
.roles .sm { height: 39px; padding: 0 11.500px; }
.pager { display: flex; justify-content: center; gap: 20px; margin: 20px 0 0 1px; }
.page { width: 52px; padding: 0 16px; }
.off { opacity: 0.65; }

/* dialog over the page */
.backdrop { position: absolute; inset: 0; background: rgba(0, 0, 0, 0.5); padding-top: 36px; }
.modal { width: 623px; margin: 0 auto; background: #fff; border-radius: 9px; }
.m-head { height: 86px; display: flex; justify-content: space-between; align-items: center; padding: 0 20px; border-bottom: 1px solid #dee2e6; }
.m-head h4 { margin: 0; font-size: 30px; font-weight: 400; line-height: 38px; }
.m-body { height: 238px; padding: 20px; border-bottom: 1px solid #dee2e6; }
.m-body p { margin: 0 0 20px; }
.select { height: 47px; display: flex; align-items: center; justify-content: space-between; padding: 0 18px 0 15px; border: 1px solid #dee2e6; border-radius: 8px; }
.m-foot { height: 87px; display: flex; justify-content: flex-end; gap: 10px; padding: 20px; }

/* browser side bar */
.edgebar { width: 54px; display: flex; flex-direction: column; align-items: center; padding-top: 10px; color: #111; }
.edgebar svg { width: 22px; height: 22px; margin-bottom: 28px; }
.edgebar .copilot { width: 30px; height: 28px; margin-bottom: 26px; }
.edgebar svg:nth-child(2) { margin-bottom: 29px; }
.edgebar svg:nth-child(3) { margin-bottom: 29px; }
.edgebar svg:nth-child(10) { margin-bottom: 31px; }
.edgebar hr { width: 35px; height: 1px; border: 0; background: #bbb; margin: auto 0 17px; }
.edgebar .plus { margin-bottom: 0; }
.edgebar .gear { margin-bottom: 17px; }

/* taskbar */
.taskbar { height: 60px; flex: none; display: flex; align-items: center; padding-bottom: 1px; border-top: 1px solid #aeb8bc; background: linear-gradient(90deg, #dde5e6, #dde6ec 25%, #d6eaf2 37%, #d8eaf1 75%, #d8e7f2); font-size: 15px; line-height: 20px; }
.weather { width: 531px; margin-left: 25px; display: flex; align-items: center; gap: 4px; letter-spacing: -0.15px; }
.weather svg { margin-top: -1px; }
.weather div { margin-top: -3px; }
.weather span { color: #555; }
.badge { font: 15px "Open Sans", sans-serif; fill: #fff; text-anchor: middle; }
.sbadge { font: 12px "Open Sans", sans-serif; fill: #fff; text-anchor: middle; }
.pill { width: 273px; height: 39px; margin-left: 17px; padding: 0 6px 0 13px; border-radius: 20px; border: 1px solid #c5d5dd; background: #f3f9fc; display: flex; align-items: center; }
.pill span { flex: 1; margin-left: 11px; font-size: 16.3px; letter-spacing: -0.3px; color: #555; }
.apps { display: flex; margin-left: 4px; }
.apps span { width: 55px; height: 60px; display: flex; justify-content: center; align-items: center; position: relative; }
.apps svg { width: 30px; height: 30px; }
.apps .wide { width: 36px; height: 36px; margin: -6px 0 0 6px; }
.apps .run::after, .apps .snip::after { content: ""; width: 8px; height: 4px; border-radius: 2px; background: #7f888c; position: absolute; top: 50px; left: 24px; }
.apps .snip { width: 50px; height: 50px; margin: 5px 2px 0 3px; border-radius: 6px; background: #fbe6e8; }
.apps .snip::after { width: 20px; background: #c42b1c; top: 45px; left: 15px; }
.tray { margin-left: auto; display: flex; align-items: center; padding-right: 17px; letter-spacing: -0.1px; }
.tray span { display: flex; justify-content: center; }
.t40 { width: 40px; }
.t30 { width: 30px; }
.tray .lang { width: 56px; margin: -3px 4px 0 0; display: block; text-align: center; letter-spacing: -0.5px; }
.tray .clock { width: 93px; margin-top: -3px; display: block; text-align: right; white-space: nowrap; }
.bell { width: 38px; }
```
